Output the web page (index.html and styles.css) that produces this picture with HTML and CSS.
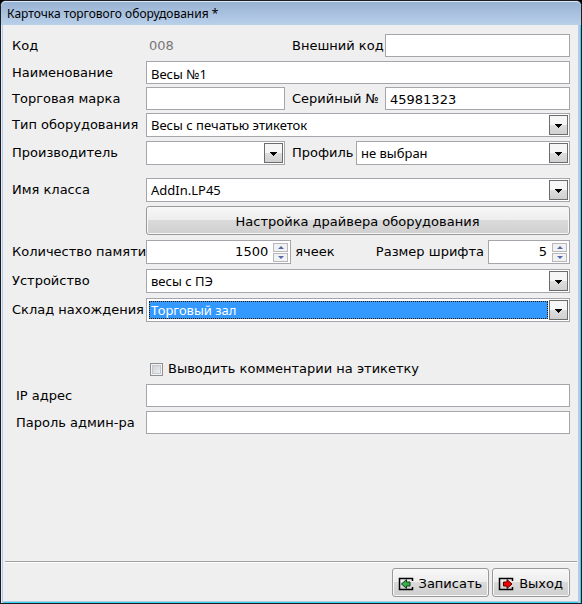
FILE: index.html
```html
<!DOCTYPE html>
<html lang="ru">
<head>
<meta charset="utf-8">
<title>Карточка торгового оборудования</title>
<link rel="stylesheet" href="styles.css">
</head>
<body>
<main class="window">
  <h1 class="titlebar">Карточка торгового оборудования *</h1>
  <form class="form">
    <div class="row">
      <label class="label" for="code">Код</label>
      <output class="code" id="code">008</output>
      <label class="label-side" for="ext">Внешний код</label>
      <input class="field grow" id="ext" type="text">
    </div>
    <div class="row gap-m">
      <label class="label" for="name">Наименование</label>
      <input class="field grow" id="name" type="text" value="Весы №1">
    </div>
    <div class="row gap-s">
      <label class="label" for="brand">Торговая марка</label>
      <input class="field half" id="brand" type="text">
      <label class="label-side" for="serial">Серийный №</label>
      <input class="field grow wide-text" id="serial" type="text" value="45981323">
    </div>
    <div class="row tall gap-s">
      <label class="label" for="type">Тип оборудования</label>
      <span class="combo grow"><select id="type"><option>Весы с печатью этикеток</option></select></span>
    </div>
    <div class="row tall gap-m">
      <label class="label" for="maker">Производитель</label>
      <span class="combo half"><select id="maker"><option></option></select></span>
      <label class="label-side short" for="profile">Профиль</label>
      <span class="combo grow"><select id="profile"><option>не выбран</option></select></span>
    </div>
    <div class="row tall gap-l">
      <label class="label" for="class">Имя класса</label>
      <span class="combo grow"><select id="class"><option>AddIn.LP45</option></select></span>
    </div>
    <div class="row gap-m">
      <button class="button driver" type="button">Настройка драйвера оборудования</button>
    </div>
    <div class="row tall gap-x">
      <label class="label" for="memory">Количество памяти</label>
      <span class="spin memory">
        <input id="memory" type="text" inputmode="numeric" value="1500">
        <span class="steps"><button class="up" type="button" aria-label="Больше"></button><button class="down" type="button" aria-label="Меньше"></button></span>
      </span>
      <span class="unit">ячеек</span>
      <label class="label-size" for="size">Размер шрифта</label>
      <span class="spin size">
        <input id="size" type="text" inputmode="numeric" value="5">
        <span class="steps"><button class="up" type="button" aria-label="Больше"></button><button class="down" type="button" aria-label="Меньше"></button></span>
      </span>
    </div>
    <div class="row tall gap-x">
      <label class="label" for="device">Устройство</label>
      <span class="combo grow"><select id="device"><option>весы с ПЭ</option></select></span>
    </div>
    <div class="row tall gap-x">
      <label class="label" for="store">Склад нахождения</label>
      <span class="combo active grow"><select id="store"><option>Торговый зал</option></select></span>
    </div>
    <div class="row check-row">
      <input class="check" id="comments" type="checkbox">
      <label for="comments">Выводить комментарии на этикетку</label>
    </div>
    <div class="row gap-m">
      <label class="label indent" for="ip">IP адрес</label>
      <input class="field grow" id="ip" type="text">
    </div>
    <div class="row gap-m">
      <label class="label indent" for="password">Пароль админ-ра</label>
      <input class="field grow" id="password" type="password">
    </div>
  </form>
  <footer class="footer">
    <button class="button" type="button">
      <svg class="icon" viewBox="0 0 16 14" aria-hidden="true">
        <path d="M14.500 4V1.500h-13v11h13V10" fill="none" stroke="#000" stroke-width="1.500"/>
        <path d="M3.500 7L8.500 2.500V5H12v4H8.500v2.500z" fill="#35b04a" stroke="#123c18"/>
      </svg>
      Записать
    </button>
    <button class="button" type="button">
      <svg class="icon" viewBox="0 0 16 14" aria-hidden="true">
        <path d="M14.500 4V1.500h-13v11h13V10" fill="none" stroke="#000" stroke-width="1.500"/>
        <path d="M14 7L9 2.500V5H5.500v4H9v2.500z" fill="#f00000" stroke="#5a0000"/>
      </svg>
      Выход
    </button>
  </footer>
</main>
</body>
</html>
```

FILE: styles.css
```css
* {
  box-sizing: border-box;
}

body {
  margin: 0;
  background: #000;
  color: #000;
  font: 13px/16px "DejaVu Sans", Verdana, sans-serif;
}

.window {
  display: flex;
  flex-direction: column;
  min-height: 100vh;
  border: 1px solid #1c1c22;
  border-radius: 6px 6px 0 0;
  background: #efefef;
  box-shadow: inset 1px 0 #e4eefa, inset 2px 0 #b4cbe8, inset -1px 0 #35d3f0, inset -3px 0 #b4cbe8, inset 0 -1px #35d3f0, inset 0 -2px #b4cbe8;
}

.titlebar {
  margin: 0;
  padding: 4px 6px;
  border-top: 1px solid #dce8f5;
  border-radius: 5px 5px 0 0;
  background: linear-gradient(#98b2d2, #b9d0ea);
  font: 12px/15px "Noto Sans", Tahoma, sans-serif;
}

.form {
  flex: 1;
  padding: 9px 11px 0;
}

.row {
  display: flex;
  align-items: center;
  min-height: 23px;
  white-space: nowrap;
}

.tall { min-height: 24px; }
.gap-s { margin-top: 3px; }
.gap-m { margin-top: 4px; }
.gap-x { margin-top: 5px; }
.gap-l { margin-top: 13px; }

.label {
  flex: 0 0 134px;
}

.indent { padding-left: 4px; }

.label-side {
  flex: 0 0 100px;
  padding-left: 7px;
}

.short { flex-basis: 71px; }

.code {
  flex: 0 0 139px;
  padding-left: 3px;
  color: #777;
}

.grow {
  flex: 1;
  min-width: 0;
}

.half {
  flex: 0 0 139px;
  min-width: 0;
}

.field,
.combo,
.spin {
  border: 1px solid #a5a5ab;
  background: #fff;
}

.field {
  height: 23px;
  margin: 0;
  padding: 2px 4px 0;
  font: 13px/18px "Noto Sans", Tahoma, sans-serif;
}

.wide-text {
  font: 13px/18px "DejaVu Sans", Verdana, sans-serif;
}

.combo {
  display: flex;
  height: 24px;
  padding: 1px;
}

.combo::after {
  content: "";
  width: 17px;
  border: 1px solid #6c6c6c;
  background:
    linear-gradient(#000, #000) center 8px / 7px 1px no-repeat,
    linear-gradient(#000, #000) center 9px / 5px 1px no-repeat,
    linear-gradient(#000, #000) center 10px / 3px 1px no-repeat,
    linear-gradient(#000, #000) center 11px / 1px 1px no-repeat,
    linear-gradient(#f6f6f6 50%, #dedede 50%, #d0d0d0);
}

.combo select {
  flex: 1;
  min-width: 0;
  margin: 1px;
  padding: 0 1px;
  appearance: none;
  border: 1px solid transparent;
  border-radius: 0;
  outline: 0;
  background: #fff;
  color: #000;
  font: 13px/16px "Noto Sans", Tahoma, sans-serif;
}

.combo.active select {
  border: 1px dotted #331500;
  background: #3399ff;
  color: #fff;
}

.spin {
  display: flex;
  align-items: center;
  min-width: 0;
  height: 24px;
  padding-right: 2px;
}

.spin input {
  flex: 1;
  width: 100%;
  min-width: 0;
  padding: 0 5px;
  border: 0;
  outline: 0;
  background: transparent;
  font: inherit;
  text-align: right;
}

.memory { flex: 0 0 145px; }
.size { flex: 0 0 82px; }

.steps {
  display: grid;
  gap: 1px;
}

.steps button {
  width: 15px;
  height: 9px;
  padding: 0;
  border: 1px solid #b8b8bc;
  background-color: #f2f2f2;
}

.steps button::before {
  content: "";
  display: block;
  width: 0;
  margin: 0 auto;
  border: 3px solid transparent;
}

.steps .up::before {
  border-top: 0;
  border-bottom-color: #4f68ad;
}

.steps .down::before {
  border-bottom: 0;
  border-top-color: #4f68ad;
}

.unit {
  flex: 1;
  padding-left: 4px;
}

.label-size {
  padding-right: 4px;
}

.button {
  display: flex;
  align-items: center;
  justify-content: center;
  gap: 5px;
  height: 29px;
  padding: 2px 6px 0 5px;
  border: 1px solid #999;
  border-radius: 3px;
  background: linear-gradient(#f8f8f8, #ededed 48%, #dadada 50%, #cfcfcf);
  box-shadow: inset 0 0 0 1px #f8f8f8;
  color: #000;
  font: inherit;
}

.driver {
  flex: 1;
  margin-left: 134px;
}

.check-row {
  min-height: 22px;
  margin: 35px 0 5px;
  padding: 2px 0 0 138px;
}

.check {
  width: 13px;
  height: 13px;
  margin: 0 5px 0 0;
  appearance: none;
  border: 1px solid #8e8f8f;
  background: linear-gradient(135deg, #c6cbd1, #f6f6f6);
  box-shadow: inset 0 0 0 1px #f4f4f4, inset 0 0 0 2px #c4c8cc;
}

.check:checked {
  background: #4f68ad;
}

.footer {
  display: flex;
  justify-content: flex-end;
  gap: 3px;
  margin: 0 4px;
  padding: 6px 7px 6px;
  border-top: 1px solid #a0a0a0;
  box-shadow: inset 0 1px #fff;
}

.icon {
  width: 16px;
  height: 14px;
}
```
